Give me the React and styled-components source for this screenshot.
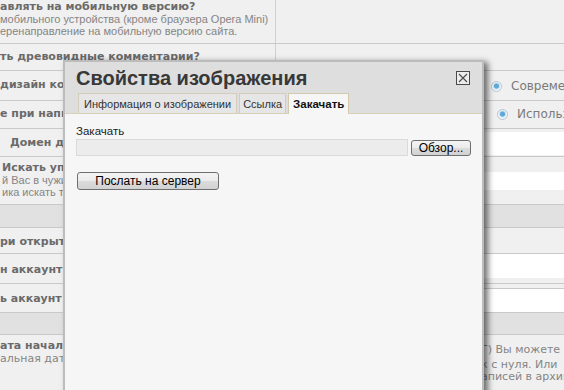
import React from 'react';
import styled, { createGlobalStyle } from 'styled-components';

const GlobalStyle = createGlobalStyle`
  html, body {
    margin: 0;
    padding: 0;
    background: #f0f0f0;
    overflow: hidden;
  }
  body {
    width: 564px;
    height: 390px;
  }
`;

const Page = styled.div`
  position: relative;
  width: 564px;
  height: 390px;
  overflow: hidden;
  background: #f0f0f0;
  font-family: "DejaVu Sans", Verdana, sans-serif;
`;

const Row = styled.div`
  display: grid;
  grid-template-columns: 276px 1fr;
  box-sizing: border-box;
  height: ${(p) => p.$h}px;
  border-bottom: 1px solid #c9c9c9;
  background: ${(p) => (p.$band ? '#e1e1e1' : 'transparent')};
`;

const Left = styled.div`
  border-right: ${(p) => (p.$band ? 'none' : '1px solid #cfcfcf')};
  padding: ${(p) => p.$top || 0}px 0 0 ${(p) => p.$indent || 0}px;
  overflow: hidden;
  white-space: nowrap;
`;

const Right = styled.div`
  padding: ${(p) => p.$top || 0}px 0 0 ${(p) => p.$indent || 0}px;
  overflow: hidden;
  white-space: nowrap;
`;

const Label = styled.div`
  font-family: "DejaVu Sans", Verdana, sans-serif;
  font-weight: bold;
  font-size: 11px;
  line-height: 14px;
  color: #6a6a6a;
`;

const Hint = styled.div`
  font-family: ${(p) => (p.$wide ? '"DejaVu Sans", Verdana' : '"Liberation Sans", Tahoma')}, sans-serif;
  font-size: 11px;
  line-height: ${(p) => (p.$wide ? 12 : 11.5)}px;
  margin-top: ${(p) => p.$mt || 0}px;
  color: #858585;
`;

const Option = styled.label`
  display: flex;
  align-items: center;
  gap: 9px;
  font-family: "DejaVu Sans", Verdana, sans-serif;
  font-size: 12px;
  color: #7a7a7a;
`;

const Radio = styled.span`
  width: 9px;
  height: 9px;
  border-radius: 50%;
  border: 1px solid #b9c4cc;
  background: radial-gradient(circle at 50% 45%, #5fa8d8 0 2px, #bfe0f4 3px, #f4f8fb 4px);
  flex: none;
`;

const Field = styled.div`
  box-sizing: border-box;
  margin-top: ${(p) => p.$mt}px;
  margin-left: 20px;
  height: ${(p) => p.$h}px;
  background: #ffffff;
  border-top: ${(p) => (p.$edge ? '1px solid #c9c9c9' : 'none')};
`;

const Dialog = styled.div`
  position: absolute;
  left: 63px;
  top: 60px;
  width: 421px;
  height: 345px;
  box-sizing: border-box;
  border: 2px solid #bcbcbc;
  background: #f6f6f6;
  box-shadow: 4px 2px 6px rgba(0, 0, 0, 0.55);
  font-family: "Liberation Sans", Tahoma, Arial, sans-serif;
  display: flex;
  flex-direction: column;
`;

const Header = styled.div`
  background: #dedede;
  border-bottom: 1px solid #d9cfb6;
  padding: 4px 12px 0 13px;
`;

const TitleRow = styled.div`
  display: flex;
  justify-content: space-between;
  align-items: flex-start;
  height: 27px;
`;

const Title = styled.h1`
  margin: 0 0 0 -2px;
  font-family: "Liberation Sans", Arial, sans-serif;
  font-size: 20px;
  line-height: 24px;
  font-weight: bold;
  color: #383838;
`;

const Close = styled.button`
  margin-top: 5px;
  width: 14px;
  height: 14px;
  padding: 0;
  border: none;
  background: none;
  display: flex;
`;

const Tabs = styled.div`
  display: flex;
  gap: 2px;
  align-items: flex-end;
`;

const Tab = styled.div`
  box-sizing: border-box;
  height: ${(p) => (p.$active ? 21 : 20)}px;
  margin-bottom: ${(p) => (p.$active ? -1 : 0)}px;
  padding: 0 ${(p) => p.$pad ?? 5}px;
  border: 1px solid ${(p) => (p.$active ? '#d3c9ae' : '#d4cdbb')};
  border-bottom: none;
  background: ${(p) => (p.$active ? '#f6f6f6' : '#e6e6e6')};
  font-size: ${(p) => (p.$active ? 11.5 : 11)}px;
  line-height: ${(p) => (p.$active ? 21 : 20)}px;
  color: ${(p) => (p.$active ? '#111' : '#333')};
  font-weight: ${(p) => (p.$active ? 'bold' : 'normal')};
`;

const Body = styled.div`
  padding: 10px 11px;
  font-size: 11.5px;
  color: #222;
`;

const FieldLabel = styled.div`
  line-height: 14px;
  margin-bottom: 1px;
`;

const UploadRow = styled.div`
  display: flex;
  align-items: center;
  gap: 3px;
`;

const FileInput = styled.div`
  box-sizing: border-box;
  width: 332px;
  height: 17px;
  background: #ececec;
  border: 1px solid #dadada;
`;

const Button = styled.button`
  box-sizing: border-box;
  height: ${(p) => p.$h || 16}px;
  width: ${(p) => p.$w}px;
  margin: ${(p) => p.$m || 0};
  padding: 0;
  border: 1px solid #6f6f6f;
  border-radius: 3px;
  background: linear-gradient(#f4f4f4, #ebebeb 50%, #dcdcdc 51%, #d2d2d2);
  font-family: "Liberation Sans", Tahoma, Arial, sans-serif;
  font-size: 12px;
  line-height: 14px;
  color: #000;
`;

const CloseIcon = () => (
  <svg width="14" height="14" viewBox="0 0 14 14">
    <rect x="0.5" y="0.5" width="13" height="13" fill="#ececec" stroke="#4a4a4a" />
    <path d="M3 3 L11 11 M11 3 L3 11" stroke="#4a4a4a" strokeWidth="1.1" />
  </svg>
);

export default function App() {
  return (
    <>
      <GlobalStyle />
      <Page>
        <Row $h={44}>
          <Left $top={0}>
            <Label>авлять на мобильную версию?</Label>
            <Hint>мобильного устройства (кроме браузера Opera Mini)</Hint>
            <Hint>еренаправление на мобильную версию сайта.</Hint>
          </Left>
          <Right />
        </Row>
        <Row $h={27}>
          <Left $top={6}>
            <Label>ть древовидные комментарии?</Label>
          </Left>
          <Right />
        </Row>
        <Row $h={30}>
          <Left $top={7}>
            <Label>дизайн комментариев</Label>
          </Left>
          <Right $top={8} $indent={215}>
            <Option><Radio />Современный</Option>
          </Right>
        </Row>
        <Row $h={28}>
          <Left $top={6}>
            <Label>е при написании</Label>
          </Left>
          <Right $top={6} $indent={221}>
            <Option><Radio />Использовать</Option>
          </Right>
        </Row>
        <Row $h={28}>
          <Left $top={7} $indent={10}>
            <Label>Домен для</Label>
          </Left>
          <Right>
            <Field $mt={3} $h={23} />
          </Right>
        </Row>
        <Row $h={48}>
          <Left $top={4} $indent={2}>
            <Label>Искать упоминания</Label>
            <Hint>й Вас в чужих журналах</Hint>
            <Hint>ика искать только</Hint>
          </Left>
          <Right>
            <Field $mt={15} $h={18} />
          </Right>
        </Row>
        <Row $h={23} $band>
          <Left $band />
          <Right />
        </Row>
        <Row $h={26}>
          <Left $top={7}>
            <Label>ри открытии</Label>
          </Left>
          <Right />
        </Row>
        <Row $h={30}>
          <Left $top={9}>
            <Label>н аккаунт</Label>
          </Left>
          <Right>
            <Field $mt={0} $h={24} />
          </Right>
        </Row>
        <Row $h={29}>
          <Left $top={8}>
            <Label>ь аккаунт</Label>
          </Left>
          <Right>
            <Field $mt={4} $h={25} $edge />
          </Right>
        </Row>
        <Row $h={22} $band>
          <Left $band />
          <Right />
        </Row>
        <Row $h={60}>
          <Left $top={4}>
            <Label>ата начала журнала</Label>
            <Hint $wide>альная дата</Hint>
          </Left>
          <Right $top={9} $indent={205}>
            <Hint $wide>Г) Вы можете</Hint>
            <Hint $wide $mt={3}>к с нуля. Или</Hint>
            <Hint $wide>аписей в архиве</Hint>
          </Right>
        </Row>

        <Dialog>
          <Header>
            <TitleRow>
              <Title>Свойства изображения</Title>
              <Close aria-label="Закрыть"><CloseIcon /></Close>
            </TitleRow>
            <Tabs>
              <Tab>Информация о изображении</Tab>
              <Tab $pad={3}>Ссылка</Tab>
              <Tab $active $pad={4}>Закачать</Tab>
            </Tabs>
          </Header>
          <Body>
            <FieldLabel>Закачать</FieldLabel>
            <UploadRow>
              <FileInput />
              <Button $w={60} $h={16}>Обзор...</Button>
            </UploadRow>
            <Button $w={142} $h={18} $m="16px 0 0 1px">Послать на сервер</Button>
          </Body>
        </Dialog>
      </Page>
    </>
  );
}
